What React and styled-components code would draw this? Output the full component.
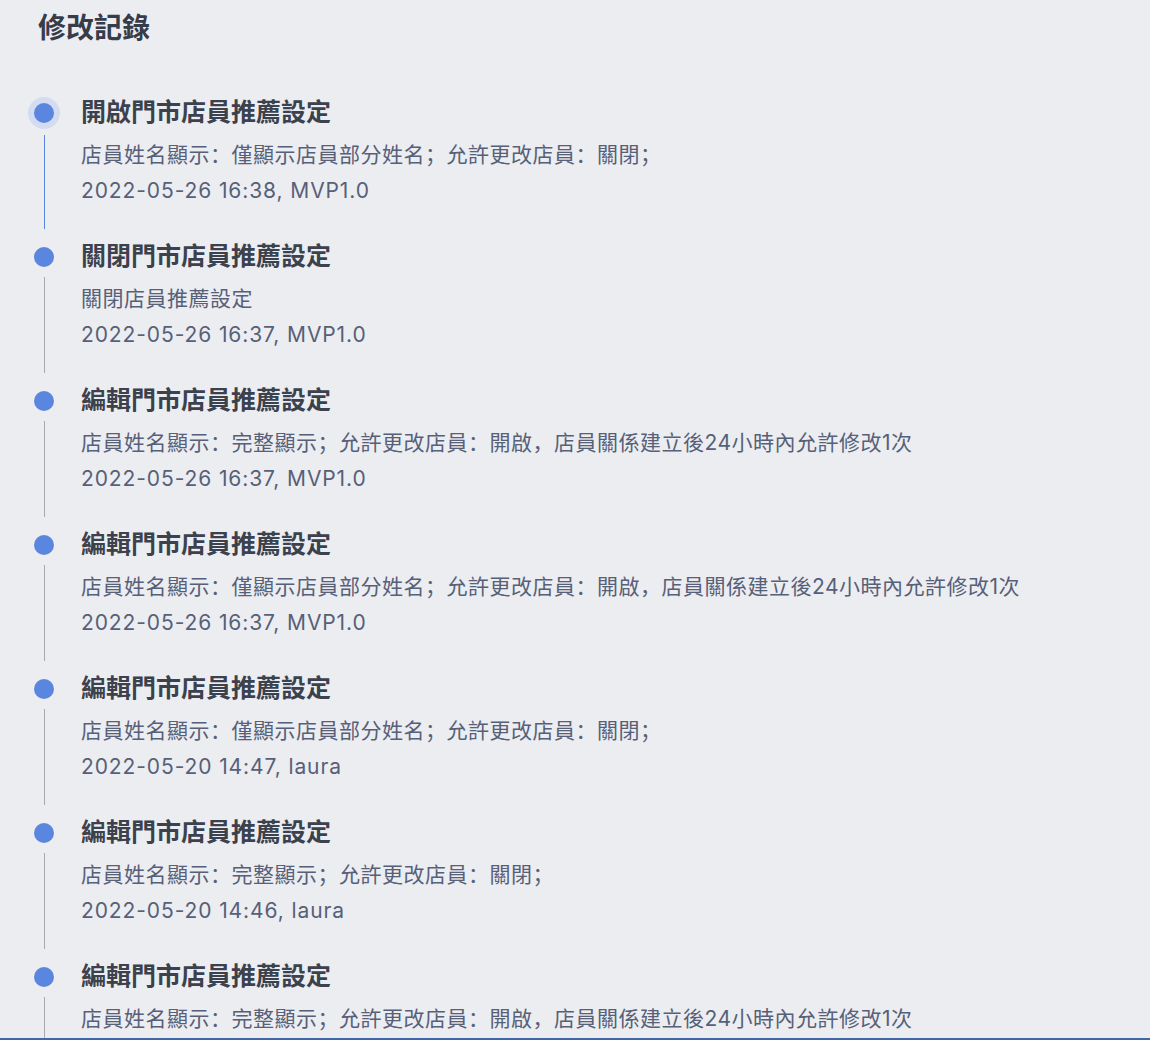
import React from "react";
import styled, { createGlobalStyle } from "styled-components";

const GlobalStyle = createGlobalStyle`
  html, body {
    margin: 0;
    padding: 0;
    background: #ecedf0;
  }
  body {
    font-family: "Inter", "Noto Sans CJK SC", "Noto Sans CJK TC", sans-serif;
  }
`;

const Page = styled.div`
  height: 100vh;
  display: flex;
  flex-direction: column;
  background: #ecedf0;
`;

const Scroll = styled.div`
  flex: 1;
  overflow: hidden;
  padding: 8px 0 0 28px;
`;

const BottomBar = styled.div`
  height: 2px;
  background: #4267a8;
`;

const Heading = styled.h2`
  margin: 0 0 0 10px;
  font-size: 28px;
  line-height: 40px;
  font-weight: 700;
  color: #363c49;
`;

const List = styled.ul`
  list-style: none;
  margin: 49px 0 0;
  padding: 0;
`;

const Item = styled.li`
  display: flex;
  height: 144px;
`;

const Rail = styled.div`
  width: 32px;
  display: flex;
  flex-direction: column;
  align-items: center;
  flex-shrink: 0;
`;

const Dot = styled.span`
  width: 20px;
  height: 20px;
  margin-top: 6px;
  border-radius: 50%;
  background: #5b86e0;
  flex-shrink: 0;
  box-shadow: ${(p) => (p.$active ? "0 0 0 6px #d3dcf1" : "none")};
`;

const Tail = styled.span`
  width: 1px;
  flex: 1;
  margin: ${(p) => (p.$active ? "12px 0 12px" : "10px 0 12px")};
  background: ${(p) => (p.$active ? "#5b86e0" : "#a8aab0")};
`;

const Body = styled.div`
  margin-left: 21px;
  display: flex;
  flex-direction: column;
`;

const Title = styled.div`
  font-size: 25px;
  line-height: 30px;
  font-weight: 600;
  color: #3c414e;
`;

const Desc = styled.div`
  margin-top: 10px;
  font-size: 21px;
  line-height: 36px;
  letter-spacing: 0.5px;
  color: #566079;
`;

const Meta = styled(Desc)`
  margin-top: 0;
  letter-spacing: 0.9px;
`;

const records = [
  {
    title: "開啟門市店員推薦設定",
    desc: "店員姓名顯示：僅顯示店員部分姓名；允許更改店員：關閉；",
    meta: "2022-05-26 16:38, MVP1.0",
  },
  {
    title: "關閉門市店員推薦設定",
    desc: "關閉店員推薦設定",
    meta: "2022-05-26 16:37, MVP1.0",
  },
  {
    title: "編輯門市店員推薦設定",
    desc: "店員姓名顯示：完整顯示；允許更改店員：開啟，店員關係建立後24小時內允許修改1次",
    meta: "2022-05-26 16:37, MVP1.0",
  },
  {
    title: "編輯門市店員推薦設定",
    desc: "店員姓名顯示：僅顯示店員部分姓名；允許更改店員：開啟，店員關係建立後24小時內允許修改1次",
    meta: "2022-05-26 16:37, MVP1.0",
  },
  {
    title: "編輯門市店員推薦設定",
    desc: "店員姓名顯示：僅顯示店員部分姓名；允許更改店員：關閉；",
    meta: "2022-05-20 14:47, laura",
  },
  {
    title: "編輯門市店員推薦設定",
    desc: "店員姓名顯示：完整顯示；允許更改店員：關閉；",
    meta: "2022-05-20 14:46, laura",
  },
  {
    title: "編輯門市店員推薦設定",
    desc: "店員姓名顯示：完整顯示；允許更改店員：開啟，店員關係建立後24小時內允許修改1次",
    meta: "2022-05-20 14:45, laura",
  },
];

export default function App() {
  return (
    <Page>
      <GlobalStyle />
      <Scroll>
        <Heading>修改記錄</Heading>
        <List>
          {records.map((r, i) => (
            <Item key={i}>
              <Rail>
                <Dot $active={i === 0} />
                <Tail $active={i === 0} />
              </Rail>
              <Body>
                <Title>{r.title}</Title>
                <Desc>{r.desc}</Desc>
                <Meta>{r.meta}</Meta>
              </Body>
            </Item>
          ))}
        </List>
      </Scroll>
      <BottomBar />
    </Page>
  );
}
